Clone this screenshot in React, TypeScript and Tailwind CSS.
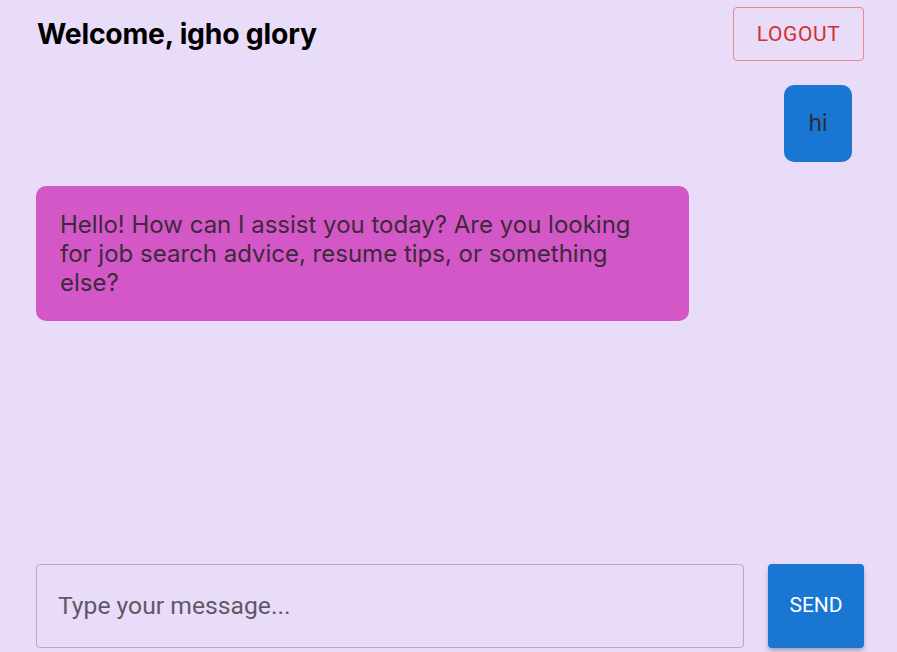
export default function App() {
  return (
    <div className="h-[652px] w-full bg-[#e8dcf8] flex flex-col pl-[36px] pr-[33px] font-['Inter',sans-serif] overflow-hidden">
      <header className="flex items-center justify-between pt-[7px]">
        <h1 className="text-[28.3px] font-bold text-black leading-none pl-[1px] tracking-[-0.2px]">Welcome, igho glory</h1>
        <button className="h-[54px] w-[131px] pt-[2px] border border-[#e9868c] rounded-[4px] text-[#d32f2f] text-[21px] font-['Roboto',sans-serif] tracking-[0.6px]">
          LOGOUT
        </button>
      </header>

      <div className="flex-1 flex flex-col gap-[24px] pt-[24px]">
        <div className="flex justify-end pr-[12px]">
          <div className="bg-[#1976d2] rounded-[10px] w-[68px] h-[77px] flex items-center justify-center text-[23px] text-[#2b2b35]">
            hi
          </div>
        </div>
        <div className="flex justify-start">
          <div className="bg-[#d457c7] rounded-[10px] w-[653px] pl-[24px] pr-[50px] pt-[24px] pb-[24px] text-[24px] leading-[29px] text-[#3b2a3a]">
            Hello! How can I assist you today? Are you looking for job search advice, resume tips, or something else?
          </div>
        </div>
      </div>

      <div className="flex gap-[24px] pb-[4px]">
        <div className="flex-1 h-[84px] border border-[#b8a8c4] rounded-[4px] flex items-center px-[21px]">
          <input
            className="w-full bg-transparent outline-none text-[24.7px] font-['Roboto',sans-serif] placeholder:text-[#5f5866]"
            placeholder="Type your message..."
          />
        </div>
        <button className="w-[96px] h-[84px] bg-[#1976d2] rounded-[4px] text-white text-[21px] font-['Roboto',sans-serif] shadow-[0_3px_4px_rgba(0,0,0,0.25)]">
          SEND
        </button>
      </div>
    </div>
  )
}
